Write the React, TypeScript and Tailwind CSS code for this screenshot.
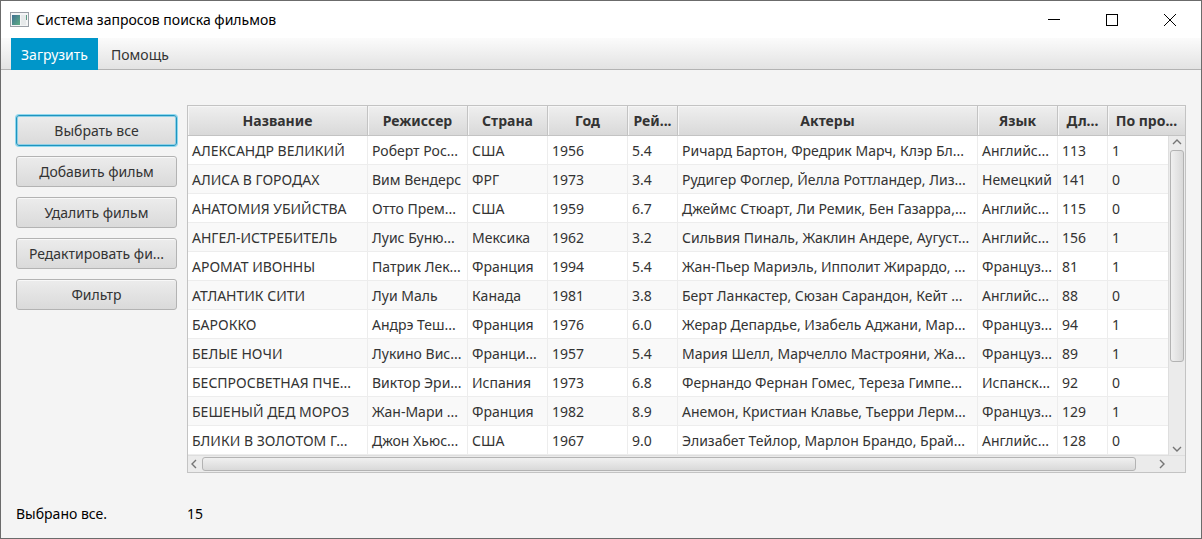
import type { ReactNode } from "react";

type Column = { title: string; width: string };

const columns: Column[] = [
  { title: "Название", width: "w-[180px]" },
  { title: "Режиссер", width: "w-[100px]" },
  { title: "Страна", width: "w-[80px]" },
  { title: "Год", width: "w-[80px]" },
  { title: "Рей...", width: "w-[50px]" },
  { title: "Актеры", width: "" },
  { title: "Язык", width: "w-[80px]" },
  { title: "Дл...", width: "w-[50px]" },
  { title: "По про...", width: "w-[77px]" },
];

const films: string[][] = [
  ["АЛЕКСАНДР ВЕЛИКИЙ", "Роберт Рос...", "США", "1956", "5.4", "Ричард Бартон, Фредрик Марч, Клэр Бл...", "Английс...", "113", "1"],
  ["АЛИСА В ГОРОДАХ", "Вим Вендерс", "ФРГ", "1973", "3.4", "Рудигер Фоглер, Йелла Роттландер, Лиз...", "Немецкий", "141", "0"],
  ["АНАТОМИЯ УБИЙСТВА", "Отто Прем...", "США", "1959", "6.7", "Джеймс Стюарт, Ли Ремик, Бен Газарра,...", "Английс...", "115", "0"],
  ["АНГЕЛ-ИСТРЕБИТЕЛЬ", "Луис Буню...", "Мексика", "1962", "3.2", "Сильвия Пиналь, Жаклин Андере, Аугуст...", "Английс...", "156", "1"],
  ["АРОМАТ ИВОННЫ", "Патрик Лек...", "Франция", "1994", "5.4", "Жан-Пьер Мариэль, Ипполит Жирардо, ...", "Француз...", "81", "1"],
  ["АТЛАНТИК СИТИ", "Луи Маль", "Канада", "1981", "3.8", "Берт Ланкастер, Сюзан Сарандон, Кейт ...", "Английс...", "88", "0"],
  ["БАРОККО", "Андрэ Теш...", "Франция", "1976", "6.0", "Жерар Депардье, Изабель Аджани, Мар...", "Француз...", "94", "1"],
  ["БЕЛЫЕ НОЧИ", "Лукино Вис...", "Франци...", "1957", "5.4", "Мария Шелл, Марчелло Мастрояни, Жа...", "Француз...", "89", "1"],
  ["БЕСПРОСВЕТНАЯ ПЧЕ...", "Виктор Эри...", "Испания", "1973", "6.8", "Фернандо Фернан Гомес, Тереза Гимпе...", "Испанск...", "92", "0"],
  ["БЕШЕНЫЙ ДЕД МОРОЗ", "Жан-Мари ...", "Франция", "1982", "8.9", "Анемон, Кристиан Клавье, Тьерри Лерм...", "Француз...", "129", "1"],
  ["БЛИКИ В ЗОЛОТОМ Г...", "Джон Хьюс...", "США", "1967", "9.0", "Элизабет Тейлор, Марлон Брандо, Брай...", "Английс...", "128", "0"],
];

const actions = ["Выбрать все", "Добавить фильм", "Удалить фильм", "Редактировать фи...", "Фильтр"];

function AppIcon() {
  return (
    <svg width="19" height="15" viewBox="0 0 19 15" aria-hidden="true">
      <defs>
        <linearGradient id="pane" x1="0" y1="0" x2="1" y2="1">
          <stop offset="0" stopColor="#3f6f92" />
          <stop offset="1" stopColor="#5fae84" />
        </linearGradient>
      </defs>
      <rect x="0.5" y="0.5" width="18" height="14" fill="#f4f5f6" stroke="#9a9fa6" />
      <rect x="2" y="3" width="8" height="10" fill="url(#pane)" />
      <rect x="11" y="3" width="5" height="10" fill="#e6e9ea" />
      <rect x="16" y="3" width="1" height="5" fill="#5c9a83" />
    </svg>
  );
}

function WindowButton({ label, children }: { label: string; children: ReactNode }) {
  return (
    <button aria-label={label} className="flex h-full w-[58px] items-center justify-center">
      <svg width="12" height="12" viewBox="0 0 12 12" fill="none" stroke="#000" shapeRendering="crispEdges">
        {children}
      </svg>
    </button>
  );
}

function Arrow({ label, d }: { label: string; d: string }) {
  return (
    <button aria-label={label} className="flex size-[14px] shrink-0 items-center justify-center">
      <svg width="10" height="10" viewBox="0 0 10 10" fill="none" stroke="#757575" strokeWidth="1.4">
        <path d={d} />
      </svg>
    </button>
  );
}

export default function App() {
  return (
    <div className="flex min-h-screen flex-col border border-[#6b6b6b] bg-[#f4f4f4] font-['Noto_Sans','Open_Sans',sans-serif] text-sm leading-5 text-[#333]">
      <header className="flex h-[37px] items-center bg-white pr-[2px] text-black">
        <div className="flex h-full flex-1 items-center gap-[7px] pl-[9px]">
          <AppIcon />
          <h1 className="whitespace-nowrap">Система запросов поиска фильмов</h1>
        </div>
        <WindowButton label="Свернуть">
          <path d="M0 5.5H12" />
        </WindowButton>
        <WindowButton label="Развернуть">
          <rect x="0.5" y="0.5" width="11" height="11" />
        </WindowButton>
        <WindowButton label="Закрыть">
          <path d="M0 0L12 12M12 0L0 12" shapeRendering="auto" />
        </WindowButton>
      </header>

      <nav className="flex h-8 border-b border-[#b3b3b3] bg-linear-to-b from-[#fbfbfb] to-[#e3e3e3] pl-[10px]">
        <button className="-mb-px w-[87px] bg-[#0096c9] pt-px text-center text-white">Загрузить</button>
        <button className="-mb-px px-[13px] pt-px">Помощь</button>
      </nav>

      <main className="flex gap-[10px] px-[15px] pt-[35px]">
        <div className="flex w-[161px] shrink-0 flex-col gap-[10px] pt-[10px]">
          {actions.map((label, i) => (
            <button
              key={label}
              className={
                i === 0
                  ? "h-[31px] rounded-[3px] border border-[#1f94bf] bg-linear-to-b from-[#ececec] to-[#dadada] whitespace-nowrap shadow-[0_0_0_1px_#8fd8ee,inset_0_0_0_1px_#8fd0e6]"
                  : "h-[31px] rounded-[3px] border border-[#b3b3b3] bg-linear-to-b from-[#ececec] to-[#dadada] whitespace-nowrap shadow-[inset_0_1px_0_#f8f8f8]"
              }
            >
              {label}
            </button>
          ))}
        </div>

        <div className="min-w-0 flex-1 border border-[#c3c3c3] bg-white">
          <div className="relative">
            <table className="w-full table-fixed border-separate border-spacing-0">
              <thead>
                <tr>
                  {columns.map((c) => (
                    <th
                      key={c.title}
                      className={`${c.width} h-[30px] overflow-hidden border-r border-b border-[#c3c3c3] bg-linear-to-b from-[#efefef] to-[#d9d9d9] p-0 pt-px font-bold whitespace-nowrap shadow-[inset_1px_1px_0_#f6f6f6] last:border-r-0`}
                    >
                      {c.title}
                    </th>
                  ))}
                </tr>
              </thead>
              <tbody>
                {films.map((film) => (
                  <tr key={film[0]} className="bg-white even:bg-[#f9f9f9]">
                    {film.map((value, i) => (
                      <td
                        key={i}
                        className="h-[29px] overflow-hidden border-r border-b border-[#ededed] pt-[2px] pr-0 pb-0 pl-1 whitespace-nowrap last:border-r-0"
                      >
                        {value}
                      </td>
                    ))}
                  </tr>
                ))}
              </tbody>
            </table>
            <div className="absolute top-[30px] right-0 bottom-0 flex w-[17px] flex-col items-center border-l border-[#dedede] bg-[#ebebeb]">
              <Arrow label="Вверх" d="M1 6L5 2L9 6" />
              <div className="w-full flex-1 px-px">
                <div className="h-[73%] rounded-[3px] border border-[#b3b3b3] bg-linear-to-r from-[#f0f0f0] to-[#d9d9d9]" />
              </div>
              <Arrow label="Вниз" d="M1 4L5 8L9 4" />
            </div>
          </div>
          <div className="flex h-[17px] items-center border-t border-[#dedede] bg-[#ebebeb] pr-[16px]">
            <Arrow label="Влево" d="M6 1L2 5L6 9" />
            <div className="flex-1">
              <div className="h-[14px] w-[98%] rounded-[3px] border border-[#b3b3b3] bg-linear-to-b from-[#f0f0f0] to-[#d9d9d9]" />
            </div>
            <Arrow label="Вправо" d="M3 1L7 5L3 9" />
          </div>
        </div>
      </main>

      <footer className="flex gap-[10px] px-[15px] pt-[31px] text-black">
        <p className="w-[161px]">Выбрано все.</p>
        <p>15</p>
      </footer>
    </div>
  );
}
